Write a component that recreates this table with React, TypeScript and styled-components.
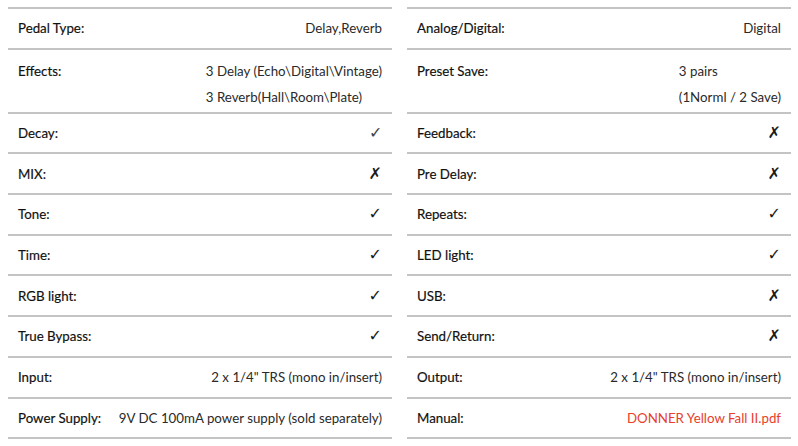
import React from "react";
import styled, { createGlobalStyle } from "styled-components";

const Global = createGlobalStyle`
  html, body { margin: 0; padding: 0; background: #fff; }
  body { font-family: Lato, "Noto Sans", sans-serif; -webkit-font-smoothing: antialiased; }
`;

const Page = styled.div`
  display: grid;
  grid-template-columns: 384px 384px;
  column-gap: 15px;
  padding: 7px 8px 0 8px;
`;

const Column = styled.div`
  display: flex;
  flex-direction: column;
  border-top: 2px solid #c4c4c4;
`;

const Row = styled.div<{ $tall?: boolean }>`
  display: flex;
  justify-content: space-between;
  align-items: ${(p) => (p.$tall ? "flex-start" : "center")};
  height: ${(p) => (p.$tall ? 54 : 38.7)}px;
  padding: ${(p) => (p.$tall ? "8px" : "0")} 10px 0 10px;
  box-sizing: content-box;
  border-bottom: 2px solid #c4c4c4;
  font-size: 13.3px;
  line-height: 26px;
`;

const Label = styled.div`
  color: #111;
  font-weight: 400;
  -webkit-text-stroke: 0.18px #111;
  white-space: nowrap;
`;

const Value = styled.div<{ $link?: boolean }>`
  color: ${(p) => (p.$link ? "#e8402c" : "#2a2a2a")};
  text-align: right;
  white-space: nowrap;
`;

const Stack = styled.div`
  display: flex;
  flex-direction: column;
  align-items: flex-start;
`;

const Mark = styled.span<{ $thin?: boolean }>`
  font-family: "DejaVu Sans", sans-serif;
  font-size: 16px;
  line-height: 26px;
  color: ${(p) => (p.$thin ? "#444" : "#1a1a1a")};
  font-weight: ${(p) => (p.$thin ? 300 : 700)};
`;

type Item = { label: string; value?: React.ReactNode; lines?: string[]; mark?: "yes" | "yes-thin" | "no"; link?: boolean };

const left: Item[] = [
  { label: "Pedal Type:", value: "Delay,Reverb" },
  { label: "Effects:", lines: ["3 Delay (Echo\\Digital\\Vintage)", "3 Reverb(Hall\\Room\\Plate)"] },
  { label: "Decay:", mark: "yes-thin" },
  { label: "MIX:", mark: "no" },
  { label: "Tone:", mark: "yes" },
  { label: "Time:", mark: "yes" },
  { label: "RGB light:", mark: "yes" },
  { label: "True Bypass:", mark: "yes" },
  { label: "Input:", value: "2 x 1/4\" TRS (mono in/insert)" },
  { label: "Power Supply:", value: "9V DC 100mA power supply (sold separately)" },
];

const right: Item[] = [
  { label: "Analog/Digital:", value: "Digital" },
  { label: "Preset Save:", lines: ["3 pairs", "(1Norml / 2 Save)"] },
  { label: "Feedback:", mark: "no" },
  { label: "Pre Delay:", mark: "no" },
  { label: "Repeats:", mark: "yes" },
  { label: "LED light:", mark: "yes" },
  { label: "USB:", mark: "no" },
  { label: "Send/Return:", mark: "no" },
  { label: "Output:", value: "2 x 1/4\" TRS (mono in/insert)" },
  { label: "Manual:", value: "DONNER Yellow Fall II.pdf", link: true },
];

function renderValue(it: Item) {
  if (it.lines) {
    return (
      <Stack>
        {it.lines.map((l) => (
          <Value key={l}>{l}</Value>
        ))}
      </Stack>
    );
  }
  if (it.mark) {
    return it.mark === "no" ? <Mark>✗</Mark> : <Mark $thin={it.mark === "yes-thin"}>✓</Mark>;
  }
  return <Value $link={it.link}>{it.value}</Value>;
}

function SpecColumn({ items }: { items: Item[] }) {
  return (
    <Column>
      {items.map((it) => (
        <Row key={it.label} $tall={!!it.lines}>
          <Label>{it.label}</Label>
          {renderValue(it)}
        </Row>
      ))}
    </Column>
  );
}

export default function App() {
  return (
    <>
      <Global />
      <Page>
        <SpecColumn items={left} />
        <SpecColumn items={right} />
      </Page>
    </>
  );
}
